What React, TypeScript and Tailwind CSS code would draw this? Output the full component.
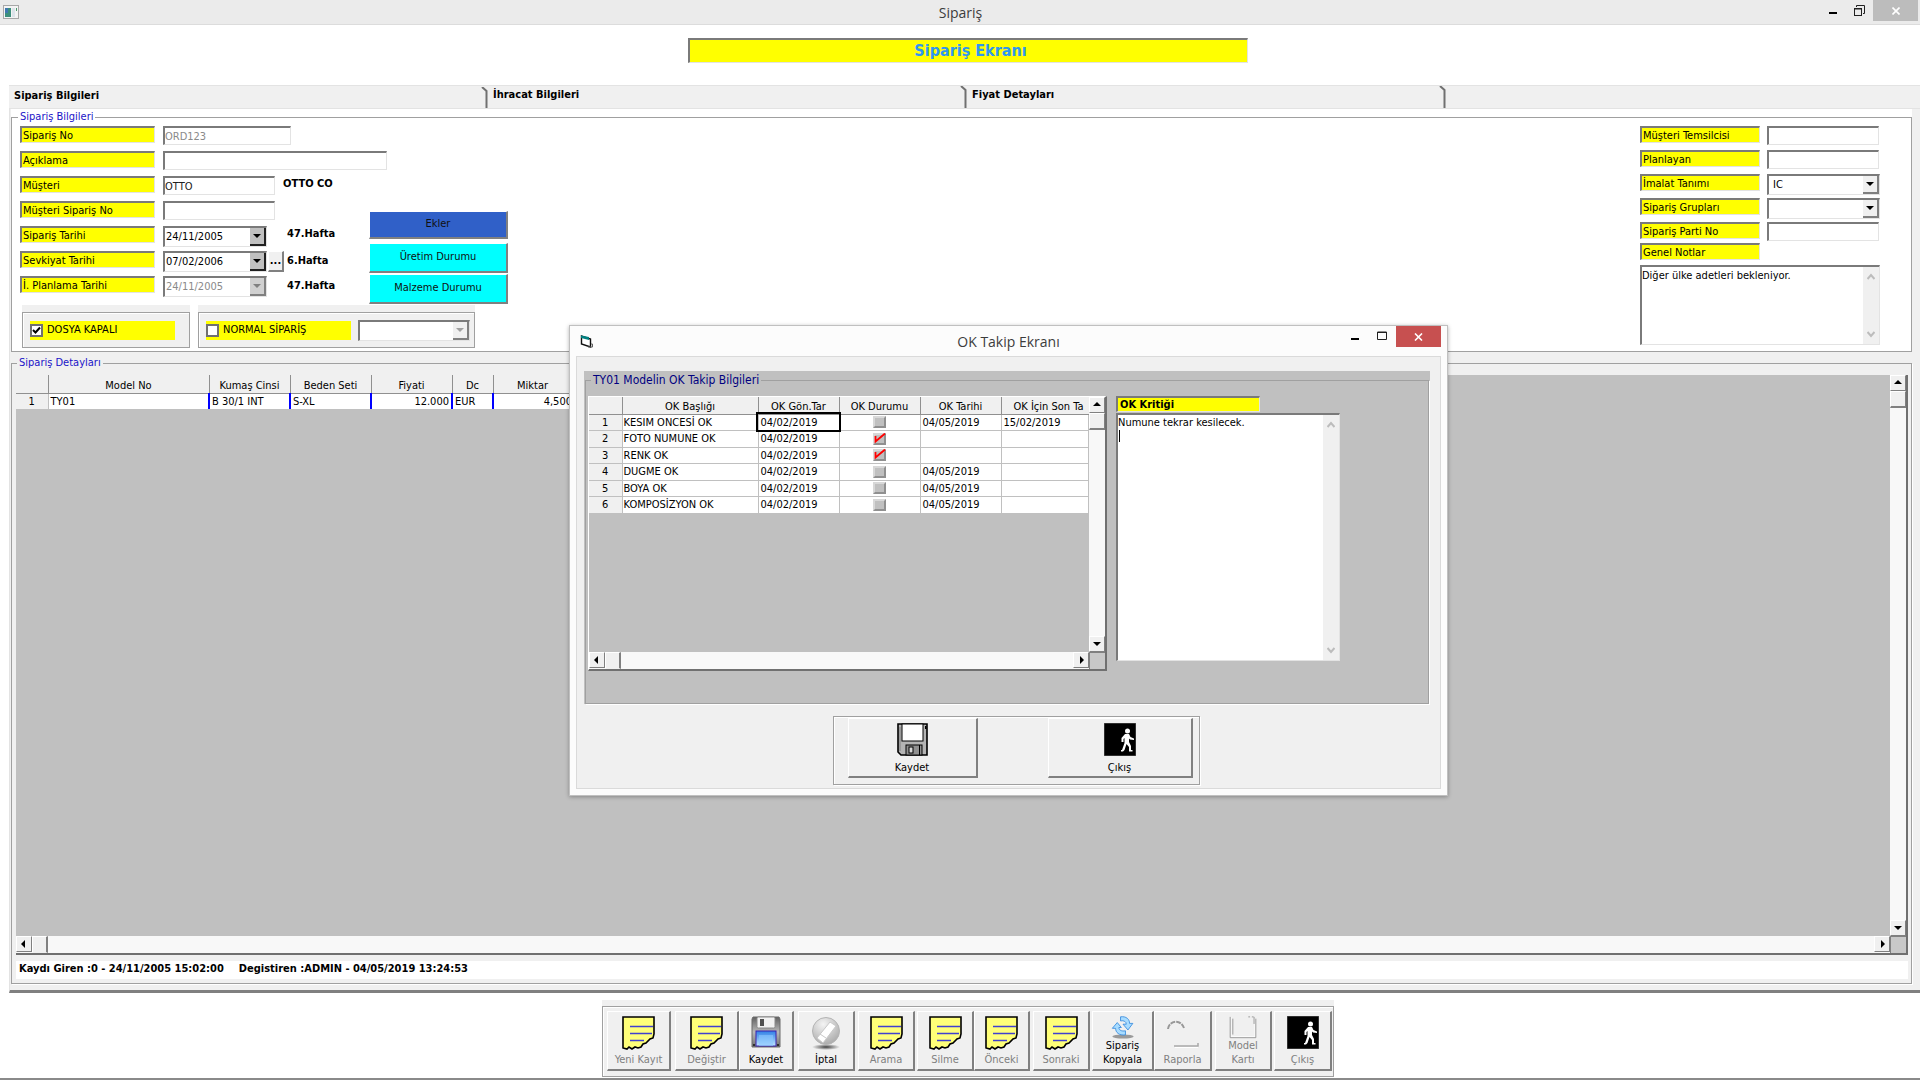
import React from 'react';

const inset = 'border-t-2 border-l-2 border-r border-b border-t-[#7a7a7a] border-l-[#7a7a7a] border-r-[#e3e3e3] border-b-[#e3e3e3]';
const raised = 'border-t border-l border-r-2 border-b-2 border-t-white border-l-white border-r-[#808080] border-b-[#808080]';
const frame = 'border border-[#a0a0a0] shadow-[inset_1px_1px_0_#fff,1px_1px_0_#fff]';

type Dir = 'up' | 'down' | 'left' | 'right';

const arrowPoints: Record<Dir, string> = {
  up: '0,5 8,5 4,1',
  down: '0,2 8,2 4,6',
  left: '5,0 5,8 1,4',
  right: '3,0 3,8 7,4',
};

const Arrow = ({ dir, color = '#000' }: { dir: Dir; color?: string }) => (
  <svg width="8" height="8" viewBox="0 0 8 8" className="shrink-0" aria-hidden="true">
    <polygon points={arrowPoints[dir]} fill={color} />
  </svg>
);

const Chevron = ({ up }: { up?: boolean }) => (
  <svg width="8" height="8" viewBox="0 0 8 8" aria-hidden="true">
    <path d={up ? 'M0.5 6 L4 2 L7.5 6' : 'M0.5 2 L4 6 L7.5 2'} fill="none" stroke="#bcbcbc" strokeWidth="2" />
  </svg>
);

const ScrollButton = ({ dir }: { dir: Dir }) => (
  <button
    type="button"
    aria-label={dir}
    className="flex h-4 w-4 shrink-0 items-center justify-center border border-t-white border-l-white border-r-[#808080] border-b-[#808080] bg-[#f0f0f0]"
  >
    <Arrow dir={dir} />
  </button>
);

const VerticalScroll = () => (
  <div className="flex w-4 shrink-0 flex-col bg-[#f8f8f8]">
    <ScrollButton dir="up" />
    <div className="h-[17px] border-t border-l border-r border-b-2 border-t-white border-l-white border-r-[#808080] border-b-[#808080] bg-[#f0f0f0]"></div>
    <div className="flex-1"></div>
    <ScrollButton dir="down" />
  </div>
);

const HorizontalScroll = () => (
  <div className="flex h-[17px] shrink-0 items-stretch bg-[#f8f8f8]">
    <ScrollButton dir="left" />
    <div className="w-4 border-t border-l border-r-2 border-b border-t-white border-l-white border-r-[#808080] border-b-[#f0f0f0] bg-[#f0f0f0]"></div>
    <div className="flex-1"></div>
    <ScrollButton dir="right" />
    <div className="w-4 border-t border-l border-[#808080] bg-[#c8c8c8]"></div>
  </div>
);

const FieldLabel = ({ id, text, width }: { id: string; text: string; width: string }) => (
  <label htmlFor={id} className={`block h-[17px] shrink-0 bg-[#ffff00] pl-px leading-[15px] ${inset} ${width}`}>
    {text}
  </label>
);

interface FieldProps {
  id: string;
  label: string;
  value?: string;
  width: string;
  disabled?: boolean;
  children?: React.ReactNode;
}

const Field = ({ id, label, value = '', width, disabled, children }: FieldProps) => (
  <div className="flex h-[25px] items-start">
    <FieldLabel id={id} text={label} width="w-[135px]" />
    <input
      id={id}
      defaultValue={value}
      disabled={disabled}
      className={`ml-2 h-[19px] shrink-0 bg-white text-[#202020] disabled:text-[#8a8a8a] ${inset} ${width}`}
    />
    {children}
  </div>
);

const DateField = ({ id, label, value = '', disabled, children }: Omit<FieldProps, 'width'>) => (
  <div className="flex h-[25px] items-start">
    <FieldLabel id={id} text={label} width="w-[135px]" />
    <div className={`ml-2 flex h-[21px] w-[104px] shrink-0 bg-white ${inset}`}>
      <input id={id} defaultValue={value} disabled={disabled} className="min-w-0 flex-1 pl-px disabled:text-[#8a8a8a]" />
      <button
        type="button"
        aria-label="Takvim"
        disabled={disabled}
        className={`flex w-4 items-center justify-center border-r-2 border-b-2 ${
          disabled ? 'border-[#808080] bg-[#d0d0d0]' : 'border-[#202020] bg-[#c0c0c0]'
        }`}
      >
        <Arrow dir="down" color={disabled ? '#808080' : '#000'} />
      </button>
    </div>
    {children}
  </div>
);

interface ComboProps {
  id: string;
  value?: string;
  className: string;
  disabled?: boolean;
  name?: string;
}

const Combo = ({ id, value = '', className, disabled, name }: ComboProps) => (
  <div className={`flex h-[21px] shrink-0 bg-white ${inset} ${className}`}>
    <select id={id} aria-label={name} defaultValue={value} disabled={disabled} className="min-w-0 flex-1 appearance-none bg-white pl-1">
      <option>{value}</option>
    </select>
    <span className="flex w-4 items-center justify-center border-r-2 border-b-2 border-[#808080] bg-[#f0f0f0]">
      <Arrow dir="down" color={disabled ? '#a0a0a0' : '#000'} />
    </span>
  </div>
);

const CheckField = ({ label, checked }: { label: string; checked?: boolean }) => (
  <label className="relative flex h-[19px] w-[145px] items-center gap-1 bg-[#ffff00]">
    <input type="checkbox" defaultChecked={checked} className="h-[13px] w-[13px] appearance-none border-2 border-[#707070] bg-white" />
    {checked && (
      <svg width="9" height="9" viewBox="0 0 9 9" className="absolute top-[5px] left-0.5">
        <path d="M1 4L3.500 6.500L8 1.500" fill="none" stroke="#000" strokeWidth="2" />
      </svg>
    )}
    {label}
  </label>
);

const Week = ({ text, className }: { text: string; className: string }) => (
  <span className={`font-bold leading-[15px] whitespace-nowrap ${className}`}>{text}</span>
);

const RightField = ({ id, label, children }: { id: string; label: string; children: React.ReactNode }) => (
  <div className="flex h-6 items-start gap-[7px]">
    <FieldLabel id={id} text={label} width="w-[120px]" />
    {children}
  </div>
);

const NotePad = () => (
  <svg width="33" height="34" viewBox="0 0 33 34" aria-hidden="true">
    <path
      d="M1 1H32V18L31 22L28 23L24 27L21 28L19 31L16 32L13 31L10 33L7 31L5 33L1 32Z"
      fill="#ffff78"
      stroke="#000"
      strokeWidth="1.6"
    />
    <path d="M8 10.500H31M8 17.500H30M8 24.500H22" stroke="#4040d0" strokeWidth="1.400" />
  </svg>
);

const BlueFloppy = () => (
  <svg width="30" height="32" viewBox="0 0 30 32" aria-hidden="true">
    <defs>
      <linearGradient id="floppyBody" x1="0" y1="0" x2="0" y2="1">
        <stop offset="0" stopColor="#606060" />
        <stop offset="0.5" stopColor="#b8b8b8" />
        <stop offset="1" stopColor="#707070" />
      </linearGradient>
      <linearGradient id="floppyLabel" x1="0" y1="0" x2="0" y2="1">
        <stop offset="0" stopColor="#2f7fe6" />
        <stop offset="1" stopColor="#bfe6ff" />
      </linearGradient>
    </defs>
    <path d="M2 1H28L29 3V31H1V3Z" fill="url(#floppyBody)" stroke="#6a6a6a" />
    <rect x="6" y="1" width="18" height="11" rx="1.500" fill="#f2f2f2" stroke="#8a8a8a" />
    <rect x="9" y="3" width="4" height="7" fill="#505050" />
    <rect x="5" y="15" width="20" height="15" fill="url(#floppyLabel)" stroke="#3a20b0" />
    <rect x="8" y="19" width="14" height="11" fill="#8cc8ff" opacity="0.6" />
    <rect x="2" y="28" width="2" height="2" fill="#303030" />
    <rect x="26" y="28" width="2" height="2" fill="#303030" />
  </svg>
);

const Eraser = () => (
  <svg width="30" height="34" viewBox="0 0 30 34" aria-hidden="true">
    <defs>
      <radialGradient id="disc" cx="0.4" cy="0.25" r="0.8">
        <stop offset="0" stopColor="#f4f4f4" />
        <stop offset="1" stopColor="#a8a8a8" />
      </radialGradient>
      <radialGradient id="discShade">
        <stop offset="0" stopColor="#404040" />
        <stop offset="1" stopColor="#404040" stopOpacity="0" />
      </radialGradient>
    </defs>
    <ellipse cx="15" cy="31" rx="14" ry="3" fill="url(#discShade)" />
    <circle cx="15" cy="15" r="13.500" fill="url(#disc)" stroke="#b4b4b4" />
    <path d="M6 22L19 6L25 10L12 27Z" fill="#fff" stroke="#c8c8c8" />
    <path d="M9 18L15 22" stroke="#c8c8c8" />
  </svg>
);

const CopyArrows = () => (
  <svg width="28" height="28" viewBox="0 0 28 28" aria-hidden="true">
    <ellipse cx="14" cy="25" rx="13" ry="2.500" fill="#606060" opacity="0.6" />
    <path d="M11 1C18 0 22 4 22 9L26 9L20 17L14 10L18 10C18 7 15 5 11 6Z" fill="#a8dcff" stroke="#2f86dc" />
    <path d="M17 23C9 24 5 20 5 15L1 15L7 8L12 14L9 14C9 17 12 19 17 18Z" fill="#a8dcff" stroke="#2f86dc" />
  </svg>
);

const ReportGhost = () => (
  <svg width="34" height="34" viewBox="0 0 34 34" aria-hidden="true">
    <path d="M2 13C3 5 14 2 18 12" fill="none" stroke="#989898" strokeWidth="2" strokeDasharray="5 1" />
    <path d="M8 30H32V27" fill="none" stroke="#a8a8a8" strokeWidth="1.500" />
    <path d="M9 31.500H32" stroke="#fff" />
  </svg>
);

const ModelGhost = () => (
  <svg width="32" height="26" viewBox="0 0 32 26" aria-hidden="true">
    <path d="M2.500 1V23.500H29.500V3" fill="none" stroke="#fff" />
    <path d="M1.500 1V24.500H30.500V3M4.500 3V21M28.500 1V9M22 1H24M26 1H28" fill="none" stroke="#909090" />
  </svg>
);

const WalkingMan = () => (
  <svg width="32" height="33" viewBox="0 0 32 33" aria-hidden="true">
    <rect width="32" height="33" fill="#000" stroke="#606060" />
    <circle cx="23.500" cy="8" r="2.500" fill="#fff" />
    <path
      d="M21 11H25L26.500 14L30 15.500V17L26 16.500L25 15.500V19L27 23V27H28.500V28.500H25V24L22.500 21L20.500 27L19 28.500H17V27H18L20.500 20V15L19.500 16V19H17.500V15Z"
      fill="#fff"
    />
  </svg>
);

const GreyFloppy = () => (
  <svg width="31" height="33" viewBox="0 0 31 33" aria-hidden="true">
    <path d="M1 1H30V32H4L1 29Z" fill="#b4b4b4" stroke="#000" strokeWidth="1.600" />
    <rect x="5" y="1" width="21" height="17" fill="#fff" stroke="#000" />
    <rect x="28" y="3" width="1.500" height="3" fill="#000" />
    <path d="M3 4V28" stroke="#808080" />
    <rect x="9" y="22" width="16" height="10" fill="#909090" stroke="#000" />
    <rect x="12" y="24" width="4" height="6" fill="#d8d8d8" stroke="#000" />
    <path d="M22.500 22V32" stroke="#000" />
  </svg>
);

const detailColumns = [
  { title: '', width: 'w-8' },
  { title: 'Model No', width: 'w-[161px]' },
  { title: 'Kumaş Cinsi', width: 'w-[81px]' },
  { title: 'Beden Seti', width: 'w-[81px]' },
  { title: 'Fiyati', width: 'w-[81px]' },
  { title: 'Dc', width: 'w-[41px]' },
  { title: 'Miktar', width: 'w-[79px]' },
];

const okColumns = [
  { title: '', width: 'w-[33px]' },
  { title: 'OK Başlığı', width: 'w-[136px]' },
  { title: 'OK Gön.Tar', width: 'w-[81px]' },
  { title: 'OK Durumu', width: 'w-[81px]' },
  { title: 'OK Tarihi', width: 'w-[81px]' },
];

const okRows = [
  { name: 'KESIM ONCESİ OK', sent: '04/02/2019', done: false, date: '04/05/2019', last: '15/02/2019' },
  { name: 'FOTO NUMUNE OK', sent: '04/02/2019', done: true, date: '', last: '' },
  { name: 'RENK OK', sent: '04/02/2019', done: true, date: '', last: '' },
  { name: 'DUGME OK', sent: '04/02/2019', done: false, date: '04/05/2019', last: '' },
  { name: 'BOYA OK', sent: '04/02/2019', done: false, date: '04/05/2019', last: '' },
  { name: 'KOMPOSİZYON OK', sent: '04/02/2019', done: false, date: '04/05/2019', last: '' },
];

const toolbar = [
  { label: 'Yeni Kayıt', icon: <NotePad />, size: 'w-[64px]', disabled: true },
  { label: 'Değiştir', icon: <NotePad />, size: 'ml-1 w-[64px]', disabled: true },
  { label: 'Kaydet', icon: <BlueFloppy />, size: 'w-[55px]', disabled: false },
  { label: 'İptal', icon: <Eraser />, size: 'ml-1 w-[57px]', disabled: false },
  { label: 'Arama', icon: <NotePad />, size: 'ml-[3px] w-[57px]', disabled: true },
  { label: 'Silme', icon: <NotePad />, size: 'ml-0.5 w-[57px]', disabled: true },
  { label: 'Önceki', icon: <NotePad />, size: 'w-[56px]', disabled: true },
  { label: 'Sonraki', icon: <NotePad />, size: 'ml-[3px] w-[57px]', disabled: true },
  { label: 'Sipariş Kopyala', icon: <CopyArrows />, size: 'ml-0.5 w-[62px]', disabled: false },
  { label: 'Raporla', icon: <ReportGhost />, size: 'w-[58px]', disabled: true },
  { label: 'Model Kartı', icon: <ModelGhost />, size: 'ml-[3px] w-[57px]', disabled: true },
  { label: 'Çıkış', icon: <WalkingMan />, size: 'ml-0.5 w-[58px]', disabled: true },
];

const TitleBar = () => (
  <header className="flex h-[25px] items-start border-b border-[#dcdcdc] bg-[#ebebeb]">
    <div className="flex flex-1 pt-[5px] pl-[3px]">
      <svg width="16" height="14" viewBox="0 0 16 14" aria-hidden="true">
        <rect x="0.500" y="0.500" width="15" height="13" fill="#f4f4f4" stroke="#a8a8a8" />
        <rect x="2" y="3" width="6" height="9" fill="#3c8f7c" />
        <rect x="2" y="3" width="3" height="5" fill="#3f78b0" />
        <rect x="9" y="3" width="3" height="9" fill="#dde4ea" />
        <rect x="13" y="3" width="1" height="3" fill="#4a9a6a" />
      </svg>
    </div>
    <h1 className="font-['Open_Sans',sans-serif] text-[14px] leading-[26px] text-[#3c3c3c]">Sipariş</h1>
    <div className="flex flex-1 justify-end pr-0.5">
      <button type="button" aria-label="Simge durumuna küçült" className="flex h-[22px] w-6 items-center justify-center">
        <svg width="8" height="8" viewBox="0 0 8 8"><rect y="5" width="8" height="2" fill="#000" /></svg>
      </button>
      <button type="button" aria-label="Önceki boyut" className="flex h-5 w-7 items-center justify-center">
        <svg width="11" height="11" viewBox="0 0 11 11" fill="none" stroke="#202020">
          <path d="M2.500 2V0.500H10.500V8.500H9" />
          <rect x="0.500" y="3.500" width="7" height="7" />
          <path d="M0 4H8" />
        </svg>
      </button>
      <button type="button" aria-label="Kapat" className="flex h-[21px] w-[45px] items-center justify-center bg-[#bcbcbc]">
        <svg width="8" height="8" viewBox="0 0 8 8"><path d="M0.500 0.500L7.500 7.500M7.500 0.500L0.500 7.500" stroke="#fff" strokeWidth="1.600" /></svg>
      </button>
    </div>
  </header>
);

const Tabs = () => (
  <div role="tablist" className="ml-[9px] flex h-[23px] border-t border-[#e3e3e3] bg-[#f0f0f0] font-bold">
    {['Sipariş Bilgileri', 'İhracat Bilgileri', 'Fiyat Detayları'].map((tab, i) => (
      <button
        key={tab}
        type="button"
        role="tab"
        aria-selected={i === 0}
        className={`flex w-[479px] justify-between pl-[5px] text-left leading-[18px] ${i === 0 ? 'pt-px' : ''}`}
      >
        {tab}
        <svg width="7" height="22" viewBox="0 0 7 22" aria-hidden="true">
          <path d="M1 0L5.500 4V22" fill="none" stroke="#707070" strokeWidth="2" />
        </svg>
      </button>
    ))}
  </div>
);

const OrderInfo = () => (
  <div className="mr-2 bg-white pt-px">
    <fieldset className="flex min-w-0 items-start border border-[#a0a0a0] pr-[31px] pb-[3px] pl-2">
      <legend className="-ml-0.5 px-0.5 leading-[14px] text-[#1a14c8]">Sipariş Bilgileri</legend>
      <div className="w-[456px] shrink-0 pt-0.5">
        <Field id="order" label="Sipariş No" value="ORD123" width="w-[128px]" disabled />
        <Field id="note" label="Açıklama" width="w-[224px]" />
        <Field id="customer" label="Müşteri" value="OTTO" width="w-[112px]">
          <Week text="OTTO CO" className="ml-2" />
        </Field>
        <Field id="customerOrder" label="Müşteri Sipariş No" width="w-[112px]" />
        <DateField id="orderDate" label="Sipariş Tarihi" value="24/11/2005">
          <Week text="47.Hafta" className="ml-5" />
        </DateField>
        <DateField id="shipDate" label="Sevkiyat Tarihi" value="07/02/2006">
          <button type="button" className={`ml-px h-[21px] w-4 bg-[#f0f0f0] leading-4 font-bold ${raised}`}>...</button>
          <Week text="6.Hafta" className="ml-[3px] pt-0.5" />
        </DateField>
        <DateField id="planDate" label="İ. Planlama Tarihi" value="24/11/2005" disabled>
          <Week text="47.Hafta" className="ml-5 pt-0.5" />
        </DateField>
        <div className="mt-1 ml-0.5 flex gap-2">
          <div className="w-[168px] bg-[#f0f0f0] pt-[7px]">
            <div className={`flex h-9 items-center pl-[7px] ${frame}`}>
              <CheckField label="DOSYA KAPALI" checked />
            </div>
          </div>
          <div className="w-[277px] bg-[#f0f0f0] pt-[7px]">
            <div className={`flex h-9 items-center pl-[7px] ${frame}`}>
              <CheckField label="NORMAL SİPARİŞ" />
              <Combo id="orderKind" name="Sipariş türü" className="ml-[7px] w-[112px]" disabled />
            </div>
          </div>
        </div>
      </div>
      <div className="-ml-[107px] flex w-[139px] shrink-0 flex-col pt-[87px] text-[#101010]">
        <button type="button" className={`mb-1 h-7 bg-[#3060c8] ${raised}`}>Ekler</button>
        <button type="button" className={`mb-px h-[30px] bg-[#00ffff] ${raised}`}>Üretim Durumu</button>
        <button type="button" className={`h-[30px] bg-[#00ffff] ${raised}`}>Malzeme Durumu</button>
      </div>
      <div className="ml-auto w-60 shrink-0 pt-0.5">
        <RightField id="agent" label="Müşteri Temsilcisi">
          <input id="agent" className={`h-[19px] w-28 ${inset}`} />
        </RightField>
        <RightField id="planner" label="Planlayan">
          <input id="planner" className={`h-[19px] w-28 ${inset}`} />
        </RightField>
        <RightField id="production" label="İmalat Tanımı">
          <Combo id="production" value="IC" className="w-[113px]" />
        </RightField>
        <RightField id="groups" label="Sipariş Grupları">
          <Combo id="groups" className="w-[113px]" />
        </RightField>
        <RightField id="lot" label="Sipariş Parti No">
          <input id="lot" className={`h-[19px] w-28 ${inset}`} />
        </RightField>
        <div className="-mt-[3px]">
          <FieldLabel id="notes" text="Genel Notlar" width="w-[120px]" />
        </div>
        <div className={`mt-[5px] flex h-20 ${inset}`}>
          <textarea id="notes" defaultValue="Diğer ülke adetleri bekleniyor." className="min-w-0 flex-1 resize-none overflow-hidden leading-[17px] outline-none"></textarea>
          <div className="flex w-4 flex-col items-center justify-between bg-[#f0f0f0] py-1.5">
            <Chevron up />
            <Chevron />
          </div>
        </div>
      </div>
    </fieldset>
  </div>
);

const OrderDetails = () => (
  <section
    aria-labelledby="detailsTitle"
    className="mt-[11px] mr-2 flex flex-1 flex-col border border-[#a0a0a0] pr-[3px] pb-1 pl-1 shadow-[1px_1px_0_#fff]"
  >
    <h2 id="detailsTitle" className="-mt-2 ml-px self-start bg-[#f0f0f0] px-0.5 leading-[14px] text-[#1a14c8]">Sipariş Detayları</h2>
    <div className="mt-[5px] flex flex-1 flex-col border-r-2 border-b-2 border-[#707070] bg-[#c0c0c0]">
      <div className="flex flex-1">
        <div className="flex-1">
          <table className="w-[556px] table-fixed border-collapse">
            <thead>
              <tr className="h-[18px] bg-[#f0f0f0]">
                {detailColumns.map((c) => (
                  <th key={c.title} className={`border-r border-b border-[#909090] p-0 align-bottom font-normal leading-[14px] ${c.width}`}>{c.title}</th>
                ))}
              </tr>
            </thead>
            <tbody>
              <tr className="h-4 bg-white leading-[15px]">
                <td className="border-r border-[#c0c0c0] bg-[#f0f0f0] p-0 text-center">1</td>
                <td className="border-r-2 border-[#0000ff] p-0 pl-0.5">TY01</td>
                <td className="border-r-2 border-[#0000ff] p-0 pl-0.5">B 30/1 INT</td>
                <td className="border-r-2 border-[#0000ff] p-0 pl-0.5">S-XL</td>
                <td className="border-r-2 border-[#0000ff] p-0 pr-0.5 text-right">12.000</td>
                <td className="border-r-2 border-[#0000ff] p-0 pl-0.5">EUR</td>
                <td className="p-0 text-right">4,500</td>
              </tr>
            </tbody>
          </table>
        </div>
        <VerticalScroll />
      </div>
      <HorizontalScroll />
    </div>
    <p className="mt-[6px] h-[18px] bg-white pl-[3px] leading-[15px] font-bold whitespace-nowrap">
      Kaydı Giren :0 - 24/11/2005 15:02:00
      <span className="ml-[15px]">Degistiren :ADMIN - 04/05/2019 13:24:53</span>
    </p>
  </section>
);

const OkGrid = () => (
  <div className="flex h-[275px] w-[519px] shrink-0 flex-col border-r-2 border-b-2 border-t border-l border-t-white border-l-white border-r-[#707070] border-b-[#707070]">
    <div className="flex min-h-0 flex-1">
      <div className="min-w-0 flex-1 overflow-hidden">
        <table className="w-full table-fixed border-collapse">
          <thead>
            <tr className="h-[17px] bg-[#f0f0f0]">
              {okColumns.map((c) => (
                <th key={c.title} className={`border-r border-b border-[#909090] p-0 align-bottom font-normal leading-[14px] ${c.width}`}>{c.title}</th>
              ))}
              <th className="border-b border-[#909090] p-0 pl-3 text-left align-bottom font-normal leading-[14px] whitespace-nowrap">OK İçin Son Ta</th>
            </tr>
          </thead>
          <tbody className="leading-[15px]">
            {okRows.map((r, i) => (
              <tr key={r.name} className="h-4 bg-white even:h-[17px] [&>td]:border-r [&>td]:border-b [&>td]:border-[#c0c0c0] [&>td]:p-0">
                <td className="bg-[#f0f0f0] text-center">{i + 1}</td>
                <td><span className="pl-px">{r.name}</span></td>
                <td className={i === 0 ? 'outline-2 outline-black' : ''}><span className="pl-0.5">{r.sent}</span></td>
                <td>
                  <div className="relative mx-auto h-3 w-[13px]">
                    <input
                      type="checkbox"
                      aria-label={r.name}
                      defaultChecked={r.done}
                      className="block h-3 w-[13px] appearance-none border-2 border-t-[#d8d8d8] border-l-[#d8d8d8] border-r-[#909090] border-b-[#909090] bg-[#c0c0c0]"
                    />
                    {r.done && (
                      <svg width="14" height="12" viewBox="0 0 14 12" className="pointer-events-none absolute top-0 left-0">
                        <path d="M2.500 3V8.500L12 0.500" fill="none" stroke="#f00" strokeWidth="1.800" />
                      </svg>
                    )}
                  </div>
                </td>
                <td><span className="pl-0.5">{r.date}</span></td>
                <td><span className="pl-0.5">{r.last}</span></td>
              </tr>
            ))}
          </tbody>
        </table>
      </div>
      <VerticalScroll />
    </div>
    <HorizontalScroll />
  </div>
);

const OkDialog = () => (
  <section
    role="dialog"
    aria-labelledby="okTitle"
    className="absolute top-[325px] left-[569px] w-[879px] border border-[#c0c0c0] bg-[#fcfcfc] px-1.5 pb-1.5 shadow-[0_1px_4px_rgba(0,0,0,0.3)]"
  >
    <div className="flex h-[30px] items-start">
      <div className="flex flex-1 pt-[9px] pl-1">
        <svg width="13" height="13" viewBox="0 0 13 13" aria-hidden="true">
          <path d="M1.500 1V9L10.500 12V4Z" fill="#fff" stroke="#101010" strokeWidth="1.400" />
          <path d="M1 0.500L9 2V5L1 3Z" fill="#008080" />
          <path d="M11 9H12.500V12H8" fill="none" stroke="#606060" />
        </svg>
      </div>
      <h2 id="okTitle" className="pr-1 font-['Open_Sans',sans-serif] text-[14px] leading-[31px] text-[#3c3c3c]">OK Takip Ekranı</h2>
      <div className="flex flex-1 justify-end">
        <button type="button" aria-label="Simge durumuna küçült" className="flex h-5 w-[26px] items-center justify-center">
          <svg width="8" height="8" viewBox="0 0 8 8"><rect y="6" width="8" height="2" fill="#000" /></svg>
        </button>
        <button type="button" aria-label="Ekranı kapla" className="flex h-5 w-7 items-center justify-center">
          <svg width="10" height="10" viewBox="0 0 10 10"><path d="M0.500 1H9.500V8.500H0.500Z M0 1.500H10" fill="none" stroke="#202020" /></svg>
        </button>
        <button type="button" aria-label="Kapat" className="flex h-[21px] w-[45px] items-center justify-center bg-[#c75050]">
          <svg width="9" height="8" viewBox="0 0 9 8"><path d="M1 0.500L8 7.500M8 0.500L1 7.500" stroke="#fff" strokeWidth="1.600" /></svg>
        </button>
      </div>
    </div>
    <div className="border border-[#dadada] bg-[#f0f0f0] pt-3.5 pr-2.5 pb-[3px] pl-[7px]">
      <div className="bg-[#c0c0c0] px-px pt-px">
        <fieldset className="flex min-w-0 items-start gap-[9px] border border-[#a0a0a0] px-0.5 pt-2 pb-8 shadow-[1px_1px_0_#fff]">
          <legend className="ml-[3px] px-0.5 text-[12px] leading-4 text-[#000080]">TY01 Modelin OK Takip Bilgileri</legend>
          <OkGrid />
          <div className="w-[224px]">
            <label htmlFor="critique" className={`block h-4 w-36 bg-[#ffff00] pl-0.5 leading-[14px] font-bold ${inset}`}>OK Kritiği</label>
            <div className={`relative mt-px flex h-[248px] bg-white ${inset}`}>
              <textarea
                id="critique"
                defaultValue={'Numune tekrar kesilecek.\n'}
                className="min-w-0 flex-1 resize-none overflow-hidden leading-[15px] outline-none"
              ></textarea>
              <span className="absolute top-[15px] left-px h-3 w-px bg-black"></span>
              <div className="flex w-4 flex-col items-center justify-between bg-[#f0f0f0] py-1.5">
                <Chevron up />
                <Chevron />
              </div>
            </div>
          </div>
        </fieldset>
      </div>
      <div className="mt-3 flex justify-center pl-[18px]">
        <div className={`flex h-[69px] w-[367px] pt-px pr-1.5 pl-3.5 ${frame}`}>
          <button type="button" className={`flex h-[60px] w-[130px] flex-col items-center justify-between pt-1 pb-px leading-[14px] ${raised}`}>
            <GreyFloppy />
            Kaydet
          </button>
          <button type="button" className={`ml-auto flex h-[60px] w-[145px] flex-col items-center justify-between pt-1 pb-px leading-[14px] ${raised}`}>
            <WalkingMan />
            Çıkış
          </button>
        </div>
      </div>
    </div>
  </section>
);

const Toolbar = () => (
  <nav className="mt-[7px] mb-px flex justify-center pl-4">
    <div className="bg-[#f0f0f0] pt-[6px]">
      <div className={`flex h-[71px] pt-1 pr-px pl-1 ${frame}`}>
        {toolbar.map((b) => (
          <button
            key={b.label}
            type="button"
            disabled={b.disabled}
            className={`flex h-[60px] flex-col items-center justify-between px-1 pt-1 pb-0.5 leading-[14px] disabled:text-[#808080] ${raised} ${b.size}`}
          >
            {b.icon}
            <span>{b.label}</span>
          </button>
        ))}
      </div>
    </div>
  </nav>
);

const App: React.FC = () => {
  return (
    <div className="relative flex min-h-screen flex-col overflow-hidden bg-white font-['DejaVu_Sans_Condensed','DejaVu_Sans',sans-serif] text-[11px] text-black">
      <TitleBar />
      <div className="flex justify-center pt-[13px] pb-[22px] pl-4">
        <h2 className={`h-[25px] w-[560px] bg-[#ffff00] pl-1 text-center text-[16px] leading-[22px] font-bold text-[#2f96f0] ${inset}`}>Sipariş Ekranı</h2>
      </div>
      <Tabs />
      <main className="ml-[9px] flex flex-1 flex-col border-t border-b-[3px] border-l border-t-[#e3e3e3] border-b-[#808080] border-l-[#e3e3e3] bg-[#f0f0f0] pb-1.5 pl-px">
        <OrderInfo />
        <OrderDetails />
      </main>
      <Toolbar />
      <div className="h-0.5 bg-[#8a8a8a]"></div>
      <OkDialog />
    </div>
  );
};

export default App;
